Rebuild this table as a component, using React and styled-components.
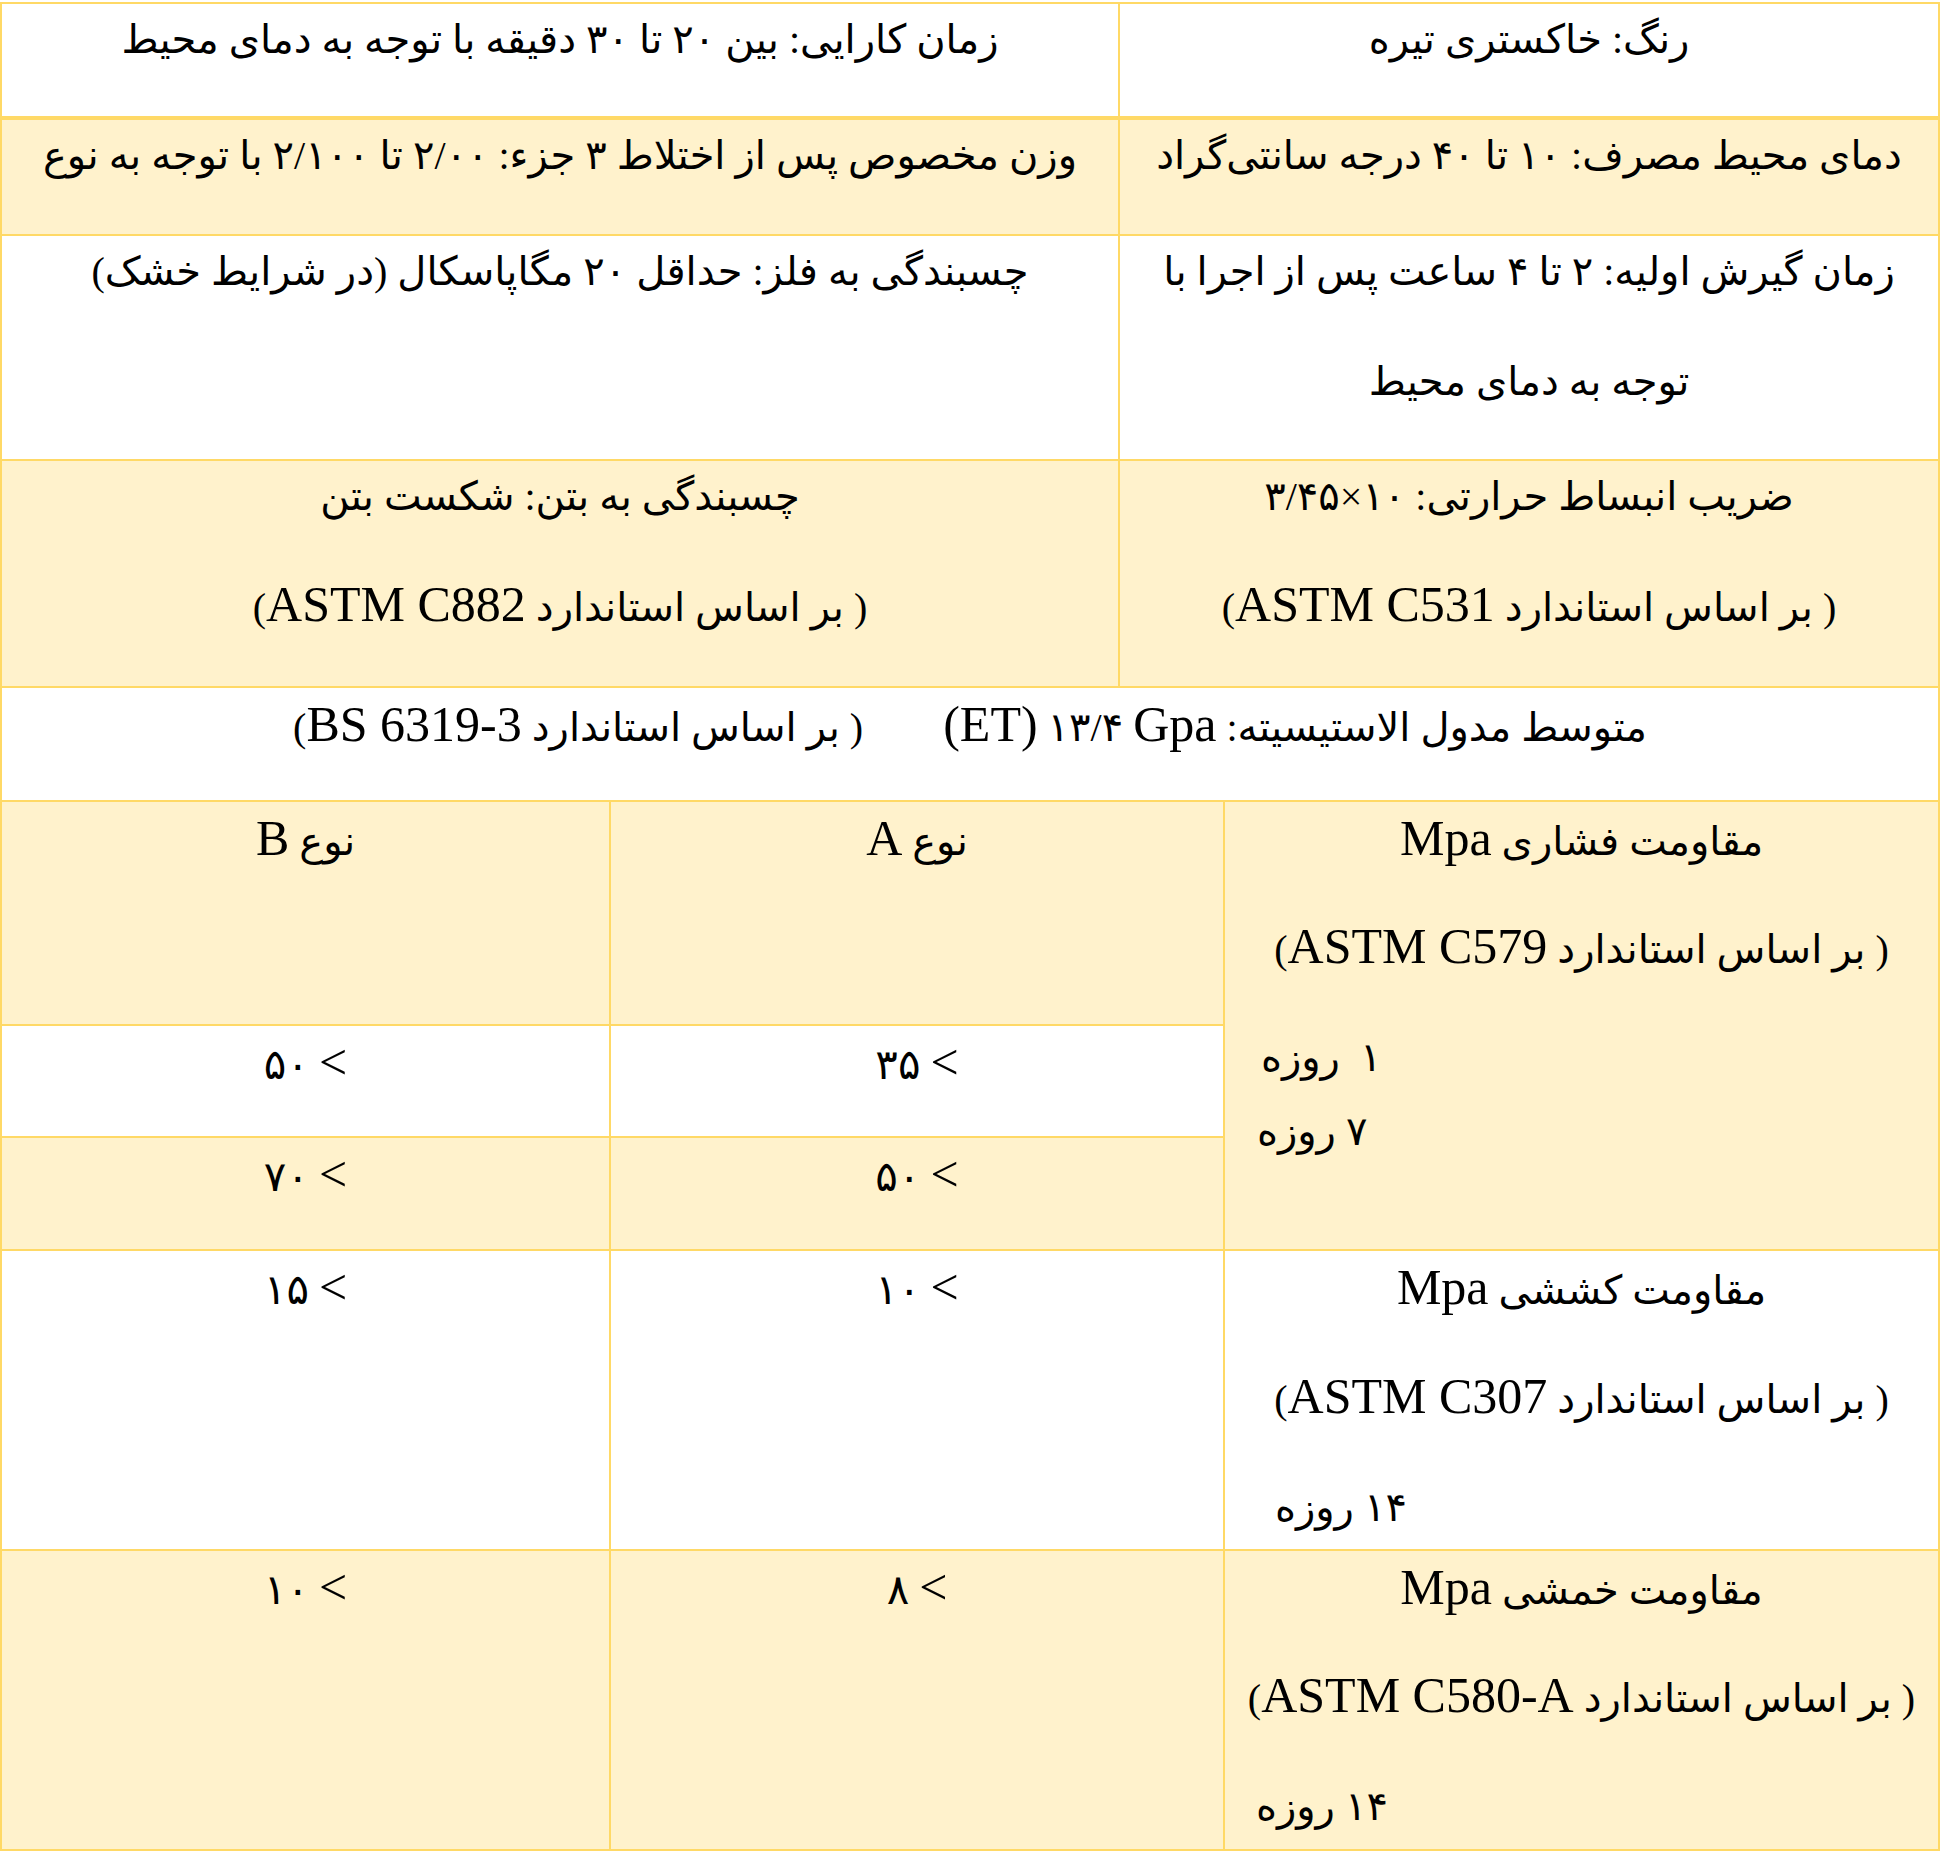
import React from "react";
import styled, { createGlobalStyle } from "styled-components";

const GlobalStyle = createGlobalStyle`
  html, body {
    margin: 0;
    padding: 0;
    background: #ffffff;
  }
  body {
    font-family: "Liberation Serif", "DejaVu Sans", serif;
    color: #000;
  }
`;

const Page = styled.div`
  width: 1941px;
  padding-top: 2px;
`;

const Table = styled.table`
  width: 1938px;
  border-collapse: collapse;
  table-layout: fixed;
  direction: rtl;
  font-family: "Liberation Serif", "DejaVu Sans", serif;
  font-size: 40px;
  color: #000;
  border: 2px solid #ffd966;
`;

const Row = styled.tr`
  height: ${(p) => p.$h}px;
  background: ${(p) => (p.$fill ? "#fff2cc" : "#ffffff")};
  border-bottom: ${(p) => (p.$thick ? 4 : 2)}px solid #ffd966;
`;

const Cell = styled.td`
  border: 2px solid #ffd966;
  vertical-align: top;
  padding: 0 6px;
  text-align: center;
  background: ${(p) => (p.$fill ? "#fff2cc" : "transparent")};
  overflow: hidden;
`;

const Line = styled.div`
  height: ${(p) => p.$h ?? 110}px;
  line-height: 72px;
  white-space: nowrap;
  text-align: ${(p) => (p.$indent != null ? "left" : "center")};
  padding-left: ${(p) => p.$indent || 0}px;
`;

const Lat = styled.span`
  font-size: 50px;
`;

const Ltr = styled.bdi`
  direction: ltr;
  unicode-bidi: isolate;
`;

const Gap = styled.span`
  display: inline-block;
  width: ${(p) => p.$w}px;
`;

const Value = styled.span`
  font-size: 42px;
`;

const Std = ({ code }) => (
  <>
    {"( بر اساس استاندارد "}
    <Lat>{code}</Lat>
    {")"}
  </>
);

const More = ({ n }) => (
  <Line>
    <Lat>&gt;</Lat> <Value>{n}</Value>
  </Line>
);

const values = [
  { a: "۳۵", b: "۵۰", fill: false },
  { a: "۵۰", b: "۷۰", fill: true },
];

export default function App() {
  return (
    <Page>
      <GlobalStyle />
      <Table>
        <colgroup>
          <col style={{ width: 715 }} />
          <col style={{ width: 105 }} />
          <col style={{ width: 509 }} />
          <col style={{ width: 609 }} />
        </colgroup>
        <tbody>
          <Row $h={115} $thick>
            <Cell colSpan={2}>
              <Line>رنگ: خاکستری تیره</Line>
            </Cell>
            <Cell colSpan={2}>
              <Line>زمان کارایی: بین ۲۰ تا ۳۰ دقیقه با توجه به دمای محیط</Line>
            </Cell>
          </Row>
          <Row $h={117} $fill>
            <Cell colSpan={2}>
              <Line>دمای محیط مصرف: ۱۰ تا ۴۰ درجه سانتی‌گراد</Line>
            </Cell>
            <Cell colSpan={2}>
              <Line>وزن مخصوص پس از اختلاط ۳ جزء: ۲/۰۰ تا ۲/۱۰۰ با توجه به نوع</Line>
            </Cell>
          </Row>
          <Row $h={225}>
            <Cell colSpan={2}>
              <Line>زمان گیرش اولیه: ۲ تا ۴ ساعت پس از اجرا با</Line>
              <Line>توجه به دمای محیط</Line>
            </Cell>
            <Cell colSpan={2}>
              <Line>چسبندگی به فلز: حداقل ۲۰ مگاپاسکال (در شرایط خشک)</Line>
            </Cell>
          </Row>
          <Row $h={227} $fill>
            <Cell colSpan={2}>
              <Line $h={107}>ضریب انبساط حرارتی: ۱۰×۳/۴۵</Line>
              <Line>
                <Std code="ASTM C531" />
              </Line>
            </Cell>
            <Cell colSpan={2}>
              <Line $h={107}>چسبندگی به بتن: شکست بتن</Line>
              <Line>
                <Std code="ASTM C882" />
              </Line>
            </Cell>
          </Row>
          <Row $h={114}>
            <Cell colSpan={4}>
              <Line>
                {"متوسط مدول الاستیسیته: "}
                <Ltr>
                  <Lat>(ET)</Lat> ۱۳/۴ <Lat>Gpa</Lat>
                </Ltr>
                <Gap $w={80} />
                <Std code="BS 6319-3" />
              </Line>
            </Cell>
          </Row>
          <Row $h={224} $fill>
            <Cell rowSpan={3} $fill>
              <Line $h={108}>
                {"مقاومت فشاری "}
                <Lat>Mpa</Lat>
              </Line>
              <Line $h={112}>
                <Std code="ASTM C579" />
              </Line>
              <Line $h={74} $indent={30}>
                ۱&nbsp; روزه
              </Line>
              <Line $h={78} $indent={26}>
                ۷ روزه
              </Line>
            </Cell>
            <Cell colSpan={2}>
              <Line>
                {"نوع "}
                <Lat>A</Lat>
              </Line>
            </Cell>
            <Cell>
              <Line>
                {"نوع "}
                <Lat>B</Lat>
              </Line>
            </Cell>
          </Row>
          {values.map((v, i) => (
            <Row key={i} $h={i === 0 ? 112 : 113} $fill={v.fill}>
              <Cell colSpan={2}>
                <More n={v.a} />
              </Cell>
              <Cell>
                <More n={v.b} />
              </Cell>
            </Row>
          ))}
          <Row $h={300}>
            <Cell>
              <Line $h={109}>
                {"مقاومت کششی "}
                <Lat>Mpa</Lat>
              </Line>
              <Line $h={112}>
                <Std code="ASTM C307" />
              </Line>
              <Line $h={74} $indent={44}>
                ۱۴ روزه
              </Line>
            </Cell>
            <Cell colSpan={2}>
              <More n="۱۰" />
            </Cell>
            <Cell>
              <More n="۱۵" />
            </Cell>
          </Row>
          <Row $h={300} $fill>
            <Cell>
              <Line $h={108}>
                {"مقاومت خمشی "}
                <Lat>Mpa</Lat>
              </Line>
              <Line $h={112}>
                <Std code="ASTM C580-A" />
              </Line>
              <Line $h={74} $indent={25}>
                ۱۴ روزه
              </Line>
            </Cell>
            <Cell colSpan={2}>
              <More n="۸" />
            </Cell>
            <Cell>
              <More n="۱۰" />
            </Cell>
          </Row>
        </tbody>
      </Table>
    </Page>
  );
}
